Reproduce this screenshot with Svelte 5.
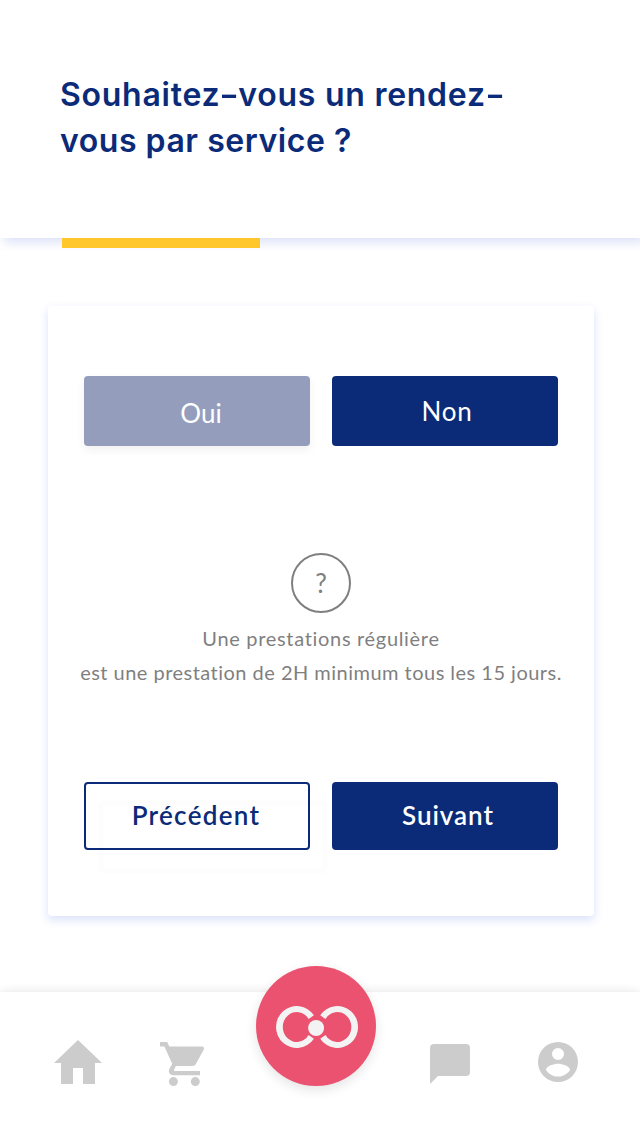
<script>
  let answer = $state('oui');
</script>

<div class="screen">
  <header>
    <h1><span class="l1">Souhaitez<i>-</i>vous un rendez<i>-</i></span><span class="l2">vous par service ?</span></h1>
    <div class="progress"></div>
  </header>

  <main>
    <section class="card">
      <div class="row choices">
        <button class="fill muted" onclick={() => (answer = 'oui')}><span class="oui">Oui</span></button>
        <button class="fill" onclick={() => (answer = 'non')}><span class="non">Non</span></button>
      </div>
      <div class="info">
        <div class="help"><span>?</span></div>
        <p class="p1"><span>Une prestations régulière</span></p>
        <p class="p2"><span>est une prestation de 2H minimum tous les 15 jours.</span></p>
      </div>
      <div class="row steps">
        <button class="outline"><span class="prev">Précédent</span></button>
        <button class="fill"><span class="next">Suivant</span></button>
      </div>
    </section>
  </main>

  <nav>
    <svg class="home" width="48" height="44" viewBox="0 0 48 44"><path d="M24 0 48 23H41V44H29V28H19V44H7V23H0Z" /></svg>
    <svg class="cart" width="46" height="46" viewBox="0 0 46 46">
      <path d="M0 0H7.2L9.3 4.4H42C43.7 4.4 44.6 6 43.8 7.5L36 21.8C35.2 23.2 33.9 24 32.3 24H15.9L14 27.7C13.7 28.3 14 29 14.6 29H40V33.2H13.2C9.8 33.2 7.9 29.9 9.4 27L12.2 21.8 4.4 4.4H0Z" />
      <circle cx="13.4" cy="39.6" r="4.5" /><circle cx="35.3" cy="39.6" r="4.5" />
    </svg>
    <div class="brand">
      <svg width="120" height="120" viewBox="0 0 120 120">
        <g fill="#f3f3f3">
          <path d="M57.9 49.3A20.7 21 0 1 0 57.9 72.7L52.6 69A14 15 0 1 1 52.6 53Z" />
          <path d="M64.2 49.3A20.7 21 0 1 1 64.2 72.7L69.5 69A14 15 0 1 0 69.5 53Z" />
          <circle cx="60.1" cy="62" r="8" />
        </g>
      </svg>
    </div>
    <svg class="chat" width="40" height="40" viewBox="0 0 40 40"><path d="M4 0H36A4 4 0 0 1 40 4V28A4 4 0 0 1 36 32H8L0 40V4A4 4 0 0 1 4 0Z" /></svg>
    <svg class="user" width="40" height="40" viewBox="0 0 40 40"><path fill-rule="evenodd" d="M20 0A20 20 0 1 0 20 40A20 20 0 1 0 20 0ZM20 6A6 6 0 1 1 20 18A6 6 0 1 1 20 6ZM20 34.6C15 34.6 10.6 32 8 28C8.1 24 16 21.8 20 21.8S31.9 24 32 28C29.4 32 25 34.6 20 34.6Z" /></svg>
  </nav>
</div>

<style>
  :global(body) { margin: 0; background: #fff; }
  .screen { width: 640px; height: 1136px; display: flex; flex-direction: column; overflow: hidden; background: #fff; font-family: Lato, sans-serif; }
  header { height: 238px; box-sizing: border-box; padding: 72px 60px 0; background: #fff; box-shadow: 4px 4px 10px rgba(70, 100, 215, 0.2); position: relative; }
  h1 { margin: 0; font: 600 32px/46px Inter, sans-serif; color: #0b2b79; white-space: nowrap; }
  h1 span { display: block; }
  .l1 { letter-spacing: 0.74px; }
  .l2 { letter-spacing: 0.54px; }
  h1 i { display: inline-block; width: 18px; font-style: normal; letter-spacing: 0; text-align: center; transform: scaleX(1.35); }
  .progress { position: absolute; left: 62px; top: 238px; width: 198px; height: 10px; background: #ffc72b; }
  main { flex: 1; padding: 68px 46px 0 48px; }
  .card { height: 610px; box-sizing: border-box; padding: 70px 36px 66px; display: flex; flex-direction: column; background: #fff; border-radius: 4px; box-shadow: 0 4px 10px rgba(70, 100, 225, 0.2); }
  .row { display: grid; grid-template-columns: 226px 226px; gap: 22px; }
  .choices { height: 70px; }
  .steps { height: 68px; }
  button { box-sizing: border-box; border: 0; border-radius: 4px; padding: 0; font: 400 26px/32px Lato, sans-serif; white-space: nowrap; position: relative; }
  .fill { background: #0b2b79; color: #fff; }
  .muted { background: #949ebc; box-shadow: 0 4px 10px rgba(0, 0, 0, 0.06); }
  .outline { background: #fff; border: 2px solid #0b2b79; color: #0b2b79; }
  .outline::after { content: ''; position: absolute; left: 13px; top: 17px; width: 220px; height: 64px; border: 4px solid rgba(0, 0, 0, 0.01); border-radius: 5px; filter: blur(1.5px); pointer-events: none; }
  .steps button { font-weight: 600; }
  button span, .info span { display: inline-block; position: relative; }
  .oui { left: 4px; top: 2px; }
  .non { left: 2px; letter-spacing: 0.7px; }
  .prev { left: -1px; top: -1px; letter-spacing: 1.3px; }
  .next { left: 3px; top: -1px; letter-spacing: 0.95px; }
  .info { flex: 1; display: flex; flex-direction: column; align-items: center; padding-top: 107px; color: #7f7f7f; }
  .help { width: 60px; height: 60px; box-sizing: border-box; border: 2px solid #7f7f7f; border-radius: 50%; display: flex; align-items: center; justify-content: center; font-size: 26px; }
  p { margin: 0; font-size: 20px; line-height: 34px; white-space: nowrap; }
  .p1 { margin-top: 8px; letter-spacing: 0.68px; }
  .p2 { letter-spacing: 0.48px; }
  nav { height: 144px; box-sizing: border-box; background: #fff; box-shadow: 0 0 10px rgba(0, 0, 0, 0.11); display: flex; align-items: flex-start; padding-left: 54px; fill: #ccc; }
  nav > svg { flex: none; }
  .home { margin-top: 48px; }
  .cart { margin: 50px 0 0 58px; }
  .brand { flex: none; width: 120px; height: 120px; margin: -26px 0 0 50px; border-radius: 50%; background: #eb5270; box-shadow: 0 4px 12px rgba(0, 0, 0, 0.11); }
  .brand svg { display: block; }
  .chat { margin: 52px 0 0 54px; }
  .user { margin: 50px 0 0 68px; }
</style>
